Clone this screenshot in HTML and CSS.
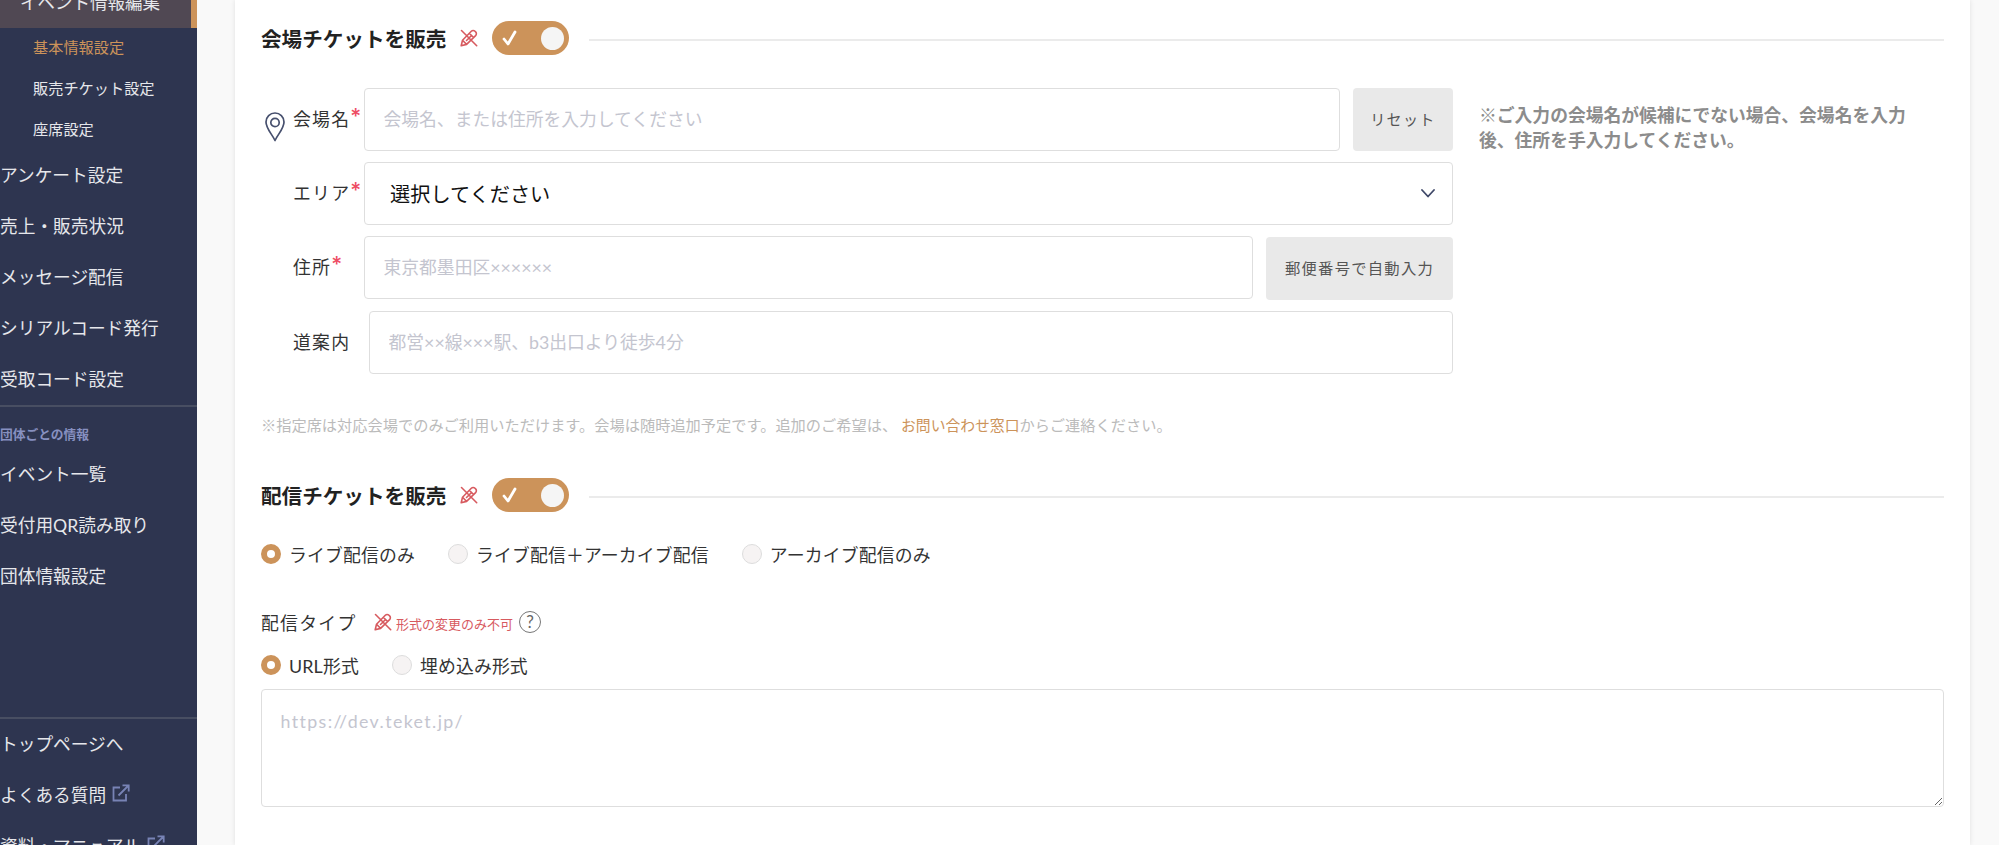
FILE: index.html
```html
<!DOCTYPE html>
<html lang="ja">
<head>
    <meta charset="UTF-8">
    <meta name="viewport" content="width=device-width, initial-scale=1.0">
    <title>基本情報設定</title>
    <link rel="stylesheet" href="styles.css">
</head>
<body>
    <!-- shared icons -->
    <svg class="icon-defs" width="0" height="0">
        <symbol id="no-edit" viewBox="0 0 18 18">
            <path d="M1.200 16.700l1.300-5.400L11.300 2.300a2.600 2.600 0 0 1 3.700 0l.6.6a2.600 2.600 0 0 1 0 3.700L6.600 15.400z M2.500 11.300l4.100 4.100 M9.300 4.300l4.300 4.300 M6.500 11.500l4.500-4.500 M1.500 1.500l15.200 15.200"/>
        </symbol>
        <symbol id="external" viewBox="0 0 18 18">
            <path d="M8 3.500H1.500V16.500H14V10 M6.500 11.500L16.500 1.500 M10.500 1.300H16.700V7.500"/>
        </symbol>
    </svg>

    <div class="layout">
        <nav class="sidebar">
            <a class="nav-item active">イベント情報編集</a>
            <a class="nav-sub current">基本情報設定</a>
            <a class="nav-sub">販売チケット設定</a>
            <a class="nav-sub">座席設定</a>
            <a class="nav-item">アンケート設定</a>
            <a class="nav-item">売上・販売状況</a>
            <a class="nav-item">メッセージ配信</a>
            <a class="nav-item">シリアルコード発行</a>
            <a class="nav-item">受取コード設定</a>
            <div class="nav-group">
                <p class="nav-title">団体ごとの情報</p>
                <a class="nav-item">イベント一覧</a>
                <a class="nav-item">受付用QR読み取り</a>
                <a class="nav-item">団体情報設定</a>
            </div>
            <div class="nav-group nav-bottom">
                <a class="nav-item">トップページへ</a>
                <a class="nav-item">よくある質問<svg class="external"><use href="#external"/></svg></a>
                <a class="nav-item">資料・マニュアル<svg class="external"><use href="#external"/></svg></a>
            </div>
        </nav>

        <main class="main">
            <form class="card">
                <div class="section-head">
                    <h2>会場チケットを販売</h2>
                    <svg class="no-edit"><use href="#no-edit"/></svg>
                    <span class="toggle">
                        <svg class="check" viewBox="0 0 16 16"><path d="M2 9l4 5L13 2"/></svg>
                        <span class="knob"></span>
                    </span>
                    <span class="rule"></span>
                </div>

                <div class="venue">
                    <svg class="pin" viewBox="0 0 20 30">
                        <path d="M10 28.500C7 22 1 16.500 1 10a9 9 0 0 1 18 0c0 6.500-6 12-9 18.500z"/>
                        <circle cx="10" cy="10.500" r="4.200"/>
                    </svg>
                    <div class="fields">
                        <div class="field">
                            <label>会場名<sup>*</sup></label>
                            <input type="text" placeholder="会場名、または住所を入力してください">
                            <button type="button">リセット</button>
                        </div>
                        <div class="field">
                            <label>エリア<sup>*</sup></label>
                            <div class="select">
                                <select><option>選択してください</option></select>
                                <svg viewBox="0 0 14 9"><path d="M1 1l6 6.500L13 1"/></svg>
                            </div>
                        </div>
                        <div class="field">
                            <label>住所<sup>*</sup></label>
                            <input type="text" placeholder="東京都墨田区××××××">
                            <button type="button" class="zip">郵便番号で自動入力</button>
                        </div>
                        <div class="field guide">
                            <label>道案内</label>
                            <input type="text" placeholder="都営××線×××駅、b3出口より徒歩4分">
                        </div>
                    </div>
                    <p class="hint">※ご入力の会場名が候補にでない場合、会場名を入力後、住所を手入力してください。</p>
                </div>

                <p class="notice">※指定席は対応会場でのみご利用いただけます。会場は随時追加予定です。追加のご希望は、 <a>お問い合わせ窓口</a>からご連絡ください。</p>

                <div class="section-head">
                    <h2>配信チケットを販売</h2>
                    <svg class="no-edit"><use href="#no-edit"/></svg>
                    <span class="toggle">
                        <svg class="check" viewBox="0 0 16 16"><path d="M2 9l4 5L13 2"/></svg>
                        <span class="knob"></span>
                    </span>
                    <span class="rule"></span>
                </div>

                <div class="radios">
                    <label><input type="radio" name="live" checked>ライブ配信のみ</label>
                    <label><input type="radio" name="live">ライブ配信＋アーカイブ配信</label>
                    <label><input type="radio" name="live">アーカイブ配信のみ</label>
                </div>

                <div class="type-head">
                    <span class="type-label">配信タイプ</span>
                    <svg class="no-edit"><use href="#no-edit"/></svg>
                    <span class="type-note">形式の変更のみ不可</span>
                    <span class="help">?</span>
                </div>

                <div class="radios type">
                    <label><input type="radio" name="type" checked>URL形式</label>
                    <label><input type="radio" name="type">埋め込み形式</label>
                </div>
                <textarea placeholder="https://dev.teket.jp/"></textarea>
            </form>
        </main>
    </div>
</body>
</html>
```
FILE: styles.css
```css
* {
    box-sizing: border-box;
}
body {
    margin: 0;
    height: 845px;
    overflow: hidden;
    background: #f9f9f9;
    color: #333;
    font-family: Lato, "Noto Sans CJK JP", sans-serif;
    font-size: 17.85px;
}
h2, p {
    margin: 0;
}
.icon-defs {
    position: absolute;
}
svg {
    fill: none;
    stroke-linecap: round;
    stroke-linejoin: round;
    flex-shrink: 0;
}
.layout {
    display: flex;
    height: 845px;
}

/* sidebar */
.sidebar {
    width: 197px;
    height: 890px;
    margin-top: -22px;
    flex-shrink: 0;
    background: #2e3550;
    color: #e6e7eb;
    white-space: nowrap;
}
.nav-item {
    display: flex;
    align-items: center;
    height: 51px;
    padding-bottom: 4px;
    font-size: 17.7px;
}
.nav-item.active {
    height: 50px;
    padding-left: 20px;
    background: #504853;
    border-right: 6px solid #cc935a;
    font-size: 17.5px;
}
.nav-sub {
    display: flex;
    align-items: center;
    height: 40.8px;
    padding: 0 0 4px 33px;
    font-size: 15.2px;
}
.nav-sub.current {
    color: #cc935a;
}
.nav-group {
    border-top: 2px solid #484e62;
}
.nav-title {
    height: 42px;
    padding-top: 17px;
    line-height: 20px;
    font-size: 12.75px;
    font-weight: 700;
    color: #8790c0;
}
.nav-bottom {
    margin-top: 115px;
}
.external {
    width: 18px;
    height: 18px;
    margin: -1px 0 0 6px;
    stroke: #7883b5;
    stroke-width: 1.8;
    stroke-linecap: butt;
    stroke-linejoin: miter;
}

/* main card */
.main {
    flex: 1;
    padding: 0 29px 0 38px;
}
.card {
    height: 845px;
    padding: 21px 26px 0;
    background: #fff;
    box-shadow: 0 0 5px rgba(0, 0, 0, 0.1);
}
.section-head {
    display: flex;
    align-items: center;
    height: 34px;
}
.section-head h2 {
    width: 200px;
    padding-top: 2px;
    line-height: 30px;
    font-size: 20.6px;
    font-weight: 700;
    color: #222;
    white-space: nowrap;
}
.no-edit {
    width: 18px;
    height: 18px;
    margin-left: -1px;
    stroke: #d75a5f;
    stroke-width: 1.6;
}
.toggle {
    display: flex;
    align-items: center;
    justify-content: space-between;
    width: 77px;
    height: 34px;
    margin-left: 14px;
    padding: 0 5px 0 10px;
    border-radius: 17px;
    background: #cc935a;
}
.check {
    width: 16px;
    height: 16px;
    stroke: #fff;
    stroke-width: 2.8;
}
.knob {
    width: 23px;
    height: 23px;
    border-radius: 50%;
    background: #f5f5f5;
}
.rule {
    flex: 1;
    height: 2px;
    margin: 4px 0 0 20px;
    background: #ebebeb;
}

/* venue form */
.venue {
    display: flex;
    margin-top: 33px;
}
.pin {
    width: 20px;
    height: 30px;
    margin: 24px 7px 0 4px;
    stroke: #47506e;
    stroke-width: 1.7;
}
.fields {
    display: flex;
    flex-direction: column;
    gap: 11px;
    width: 1161px;
}
.field {
    display: flex;
    height: 63px;
}
.field label {
    width: 72px;
    padding-left: 1px;
    flex-shrink: 0;
    line-height: 62px;
    letter-spacing: 1.275px;
    white-space: nowrap;
}
.field sup {
    position: relative;
    top: 5px;
    margin-left: 0;
    font-family: Inter, sans-serif;
    font-size: 21px;
    font-weight: 500;
    line-height: 0;
    letter-spacing: 0;
    color: #ee4d64;
}
input[type="text"], select, textarea {
    width: 100%;
    min-width: 0;
    border: 1.3px solid #dedede;
    border-radius: 4px;
    background: #fff;
    outline: none;
    font-family: inherit;
    font-size: 17.8px;
}
input[type="text"] {
    padding: 0 18.500px 2px;
}
::placeholder {
    color: #c4c5cf;
}
.field button {
    width: 100px;
    height: 63px;
    margin-left: 13px;
    padding: 0 0 3px;
    flex-shrink: 0;
    border: none;
    border-radius: 4px;
    background: #e9e9e9;
    color: #555;
    font-family: inherit;
    font-size: 15.1px;
    letter-spacing: 1.275px;
}
.field .zip {
    width: 187px;
    margin-top: 1px;
    font-size: 15.3px;
}
.select {
    position: relative;
    flex: 1;
}
.select select {
    height: 63px;
    padding: 0 25px;
    appearance: none;
    color: #111;
    font-size: 20.2px;
}
.select svg {
    position: absolute;
    right: 18px;
    top: 27px;
    width: 14px;
    height: 9px;
    stroke: #3f4868;
    stroke-width: 1.8;
}
.field.guide {
    margin-top: 1px;
}
.guide label {
    width: 77px;
}
.hint {
    width: 435px;
    margin: 15px 0 0 26px;
    line-height: 24.5px;
    font-size: 17.8px;
    font-weight: 700;
    color: #8c8c8c;
}
.notice {
    margin: 39px 0 40px;
    line-height: 25px;
    font-size: 15.23px;
    color: #bbb;
}
.notice a {
    font-size: 14.8px;
    color: #cc935a;
}

/* delivery settings */
.radios {
    display: flex;
    gap: 33px;
    margin-top: 30px;
}
.radios label {
    display: flex;
    align-items: center;
    height: 24px;
    letter-spacing: 0.15px;
    white-space: nowrap;
}
.radios input {
    appearance: none;
    width: 20px;
    height: 20px;
    margin: 0 8px 0 0;
    border: 1px solid #ddd;
    border-radius: 50%;
    background: #f6f3f3;
}
.radios input:checked {
    border: 6px solid #cc935a;
    background: #fff;
}
.type-head {
    display: flex;
    align-items: center;
    height: 24px;
    margin-top: 44px;
}
.type-label {
    width: 114px;
    letter-spacing: 1.275px;
}
.type-note {
    margin: 2px 6px 0 4px;
    font-size: 13px;
    color: #d75a5f;
}
.help {
    width: 22px;
    height: 22px;
    border: 1.3px solid #777;
    border-radius: 50%;
    font-size: 17px;
    line-height: 20px;
    text-align: center;
    color: #666;
}
.radios.type {
    margin-top: 19px;
}
textarea {
    display: block;
    height: 118px;
    margin-top: 12px;
    padding: 19px 18.500px;
    line-height: 24px;
    letter-spacing: 1.4px;
    resize: vertical;
}
```
